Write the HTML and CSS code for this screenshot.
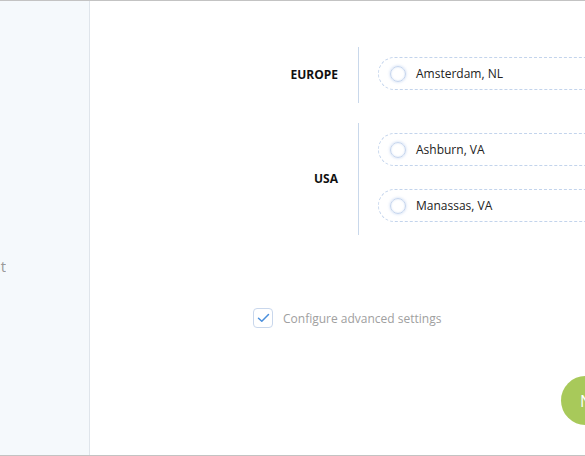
FILE: index.html
```html
<!DOCTYPE html>
<html lang="en">
<head>
  <meta charset="UTF-8">
  <title>Choose Region</title>
  <link rel="stylesheet" href="styles.css">
</head>
<body>

  <div class="app">
    <aside class="sidebar">
      <div class="nav-item"><span>Account</span></div>
    </aside>

    <main class="content">
      <div class="regions">

        <div class="region">
          <div class="region-name">EUROPE</div>
          <div class="region-list">
            <label class="location">
              <span class="radio"></span>
              <span>Amsterdam, NL</span>
            </label>
          </div>
        </div>

        <div class="region">
          <div class="region-name">USA</div>
          <div class="region-list">
            <label class="location">
              <span class="radio"></span>
              <span>Ashburn, VA</span>
            </label>
            <label class="location">
              <span class="radio"></span>
              <span>Manassas, VA</span>
            </label>
          </div>
        </div>

      </div>

      <label class="advanced">
        <span class="checkbox">
          <svg width="13" height="10" viewBox="0 0 13 10">
            <path d="M1.5 5.2 L4.8 8.3 L11.5 1.5" fill="none" stroke="#4a8fdc" stroke-width="1.5" stroke-linecap="round" stroke-linejoin="round"/>
          </svg>
        </span>
        <span>Configure advanced settings</span>
      </label>

      <button class="next">Next</button>
    </main>
  </div>

</body>
</html>
```

FILE: styles.css
```css
body {
  margin: 0;
  font-family: "Open Sans", Arial, sans-serif;
  background-color: white;
}

.app {
  display: flex;
  height: 454px;
  border-top: 1px solid #c3c3c3;
  border-bottom: 1px solid #c3c3c3;
  overflow: hidden;
}

.sidebar {
  width: 89px;
  flex-shrink: 0;
  background-color: #f5f9fc;
  border-right: 1px solid #dfe5eb;
  padding-top: 255px;
}

.nav-item {
  display: flex;
  justify-content: flex-end;
  width: 6px;
  overflow: hidden;
  white-space: nowrap;
  font-size: 15px;
  color: #9a9a9a;
}

.content {
  flex: 1;
  min-width: 0;
  padding-top: 46px;
}

.regions {
  width: max-content;
  margin-left: 148px;
  display: flex;
  flex-direction: column;
  gap: 20px;
}

.region {
  display: flex;
}

.region-name {
  flex-shrink: 0;
  width: 100px;
  padding-right: 20px;
  padding-bottom: 2px;
  display: flex;
  align-items: center;
  justify-content: flex-end;
  font-size: 12px;
  font-weight: bold;
  color: #111;
}

.region-list {
  flex-shrink: 0;
  border-left: 1px solid #c9d8eb;
  padding: 10px 0 13px 19px;
  display: flex;
  flex-direction: column;
  gap: 23px;
}

.location {
  display: flex;
  align-items: center;
  gap: 10px;
  width: 260px;
  height: 31px;
  padding-left: 11px;
  border: 1px dashed #c3d4ec;
  border-radius: 17px;
  font-size: 12px;
  color: #222;
}

.radio {
  flex-shrink: 0;
  width: 14px;
  height: 14px;
  border: 1px solid #c6d6ee;
  border-radius: 50%;
  box-shadow: 0 0 3px rgba(110, 150, 220, 0.4), inset 0 0 2px rgba(110, 150, 220, 0.3);
}

.advanced {
  display: flex;
  align-items: center;
  gap: 10px;
  margin-top: 73px;
  margin-left: 163px;
  font-size: 12px;
  color: #a0a0a0;
}

.checkbox {
  width: 18px;
  height: 18px;
  border: 1px solid #c9d7ec;
  border-radius: 4px;
  display: flex;
  align-items: center;
  justify-content: center;
}

.next {
  display: block;
  margin-top: 48px;
  margin-left: 471px;
  width: 49px;
  height: 49px;
  padding: 0 0 0 19px;
  border: none;
  border-radius: 50%;
  background-color: #a8c95a;
  color: white;
  font-family: "Open Sans", Arial, sans-serif;
  font-size: 16px;
  text-align: left;
  white-space: nowrap;
  overflow: visible;
}
```
